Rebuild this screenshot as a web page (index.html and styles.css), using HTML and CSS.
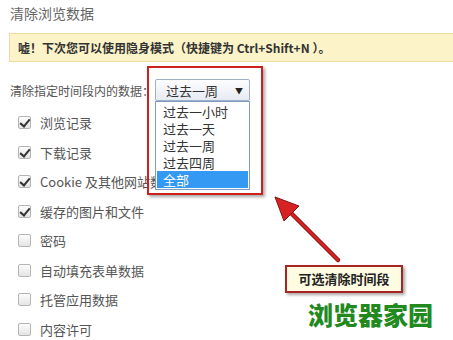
FILE: index.html
```html
<!DOCTYPE html>
<html lang="zh-CN">
<head>
    <meta charset="UTF-8">
    <meta name="viewport" content="width=device-width, initial-scale=1.0">
    <title>清除浏览数据</title>
    <link rel="stylesheet" href="styles.css">
</head>
<body>

<div class="page">
    <h2 class="title">清除浏览数据</h2>
    <div class="notice">嘘！下次您可以使用隐身模式（快捷键为 Ctrl+Shift+N ）。</div>

    <div class="range-row">
        <span class="range-label">清除指定时间段内的数据：</span>
        <div class="select-wrap">
            <div class="select">
                <span>过去一周</span>
                <span class="caret">▼</span>
            </div>
            <ul class="options">
                <li>过去一小时</li>
                <li>过去一天</li>
                <li>过去一周</li>
                <li>过去四周</li>
                <li class="selected">全部</li>
            </ul>
            <div class="red-frame"></div>
        </div>
    </div>

    <ul class="checks">
        <li><span class="box on"></span>浏览记录</li>
        <li><span class="box on"></span>下载记录</li>
        <li><span class="box on"></span>Cookie 及其他网站数据</li>
        <li><span class="box on"></span>缓存的图片和文件</li>
        <li><span class="box"></span>密码</li>
        <li><span class="box"></span>自动填充表单数据</li>
        <li><span class="box"></span>托管应用数据</li>
        <li><span class="box"></span>内容许可</li>
    </ul>

    <svg class="arrow" width="80" height="80" viewBox="0 0 80 80">
        <line x1="70" y1="70" x2="16" y2="16" stroke="#8b1010" stroke-width="4.5" stroke-linecap="round"/>
        <line x1="70" y1="70" x2="16" y2="16" stroke="#d62222" stroke-width="2.5" stroke-linecap="round"/>
        <polygon points="7,7 31,16 16,31" fill="#d62222" stroke="#8b1010" stroke-width="1"/>
    </svg>

    <div class="callout">可选清除时间段</div>
    <div class="watermark">浏览器家园</div>
</div>

</body>
</html>
```

FILE: styles.css
```css
body {
    margin: 0;
    background: #fff;
    font-family: "Noto Sans CJK SC", "Noto Sans", sans-serif;
    color: #555;
}
.page {
    position: relative;
    width: 453px;
    height: 340px;
    overflow: hidden;
}
.title {
    margin: 0;
    padding: 4px 0 0 10px;
    font-size: 14px;
    font-weight: normal;
    line-height: 18px;
    color: #666;
}
.notice {
    margin: 11px 0 0 9px;
    height: 27px;
    line-height: 27px;
    padding-left: 8px;
    background: #fcf3c9;
    border: 1px solid #eddc9e;
    border-right: none;
    font-size: 12px;
    font-weight: bold;
    color: #333;
}
.range-row {
    display: flex;
    align-items: center;
    margin-top: 17px;
    padding-left: 10px;
    height: 22px;
}
.range-label {
    font-size: 12px;
    width: 145px;
    color: #555;
}
.select-wrap {
    position: relative;
    z-index: 2;
}
.select {
    display: flex;
    justify-content: space-between;
    align-items: center;
    box-sizing: border-box;
    width: 95px;
    height: 22px;
    padding: 0 6px 0 10px;
    border: 1px solid #9fb0c6;
    border-radius: 2px;
    background: linear-gradient(#fdfdfe, #e6ebf2);
    font-size: 13px;
    color: #333;
}
.caret {
    font-size: 8px;
    color: #222;
}
.options {
    position: absolute;
    left: 0;
    top: 22px;
    box-sizing: border-box;
    width: 95px;
    margin: 0;
    padding: 1px;
    list-style: none;
    background: #fff;
    border: 1px solid #7f9dc4;
    font-size: 13px;
    color: #333;
}
.options li {
    height: 17px;
    line-height: 17px;
    padding-left: 6px;
}
.options .selected {
    background: #3399f3;
    color: #fff;
}
.red-frame {
    position: absolute;
    left: -8px;
    top: -13px;
    width: 112px;
    height: 125px;
    border: 2px solid #cf2020;
    box-shadow: 2px 2px 3px rgba(0, 0, 0, 0.35);
}
.checks {
    margin: 7px 0 0;
    padding: 0 0 0 18px;
    list-style: none;
    font-size: 13px;
}
.checks li {
    display: flex;
    align-items: center;
    height: 29.5px;
}
.box {
    box-sizing: border-box;
    width: 13px;
    height: 13px;
    margin-right: 9px;
    border: 1px solid #b5b5b5;
    border-radius: 2px;
    background: linear-gradient(#fcfcfc, #e4e4e4);
    position: relative;
}
.box.on::after {
    content: "";
    position: absolute;
    left: 3px;
    top: 0px;
    width: 4px;
    height: 8px;
    border: solid #333;
    border-width: 0 2px 2px 0;
    transform: rotate(40deg);
}
.arrow {
    position: absolute;
    left: 268px;
    top: 190px;
}
.callout {
    position: absolute;
    left: 285px;
    top: 265px;
    box-sizing: border-box;
    width: 118px;
    height: 28px;
    line-height: 24px;
    text-align: center;
    background: #fdfbe2;
    border: 2px solid #a82424;
    box-shadow: 2px 2px 3px rgba(0, 0, 0, 0.35);
    font-size: 13px;
    font-weight: bold;
    color: #222;
}
.watermark {
    position: absolute;
    left: 308px;
    top: 299px;
    font-size: 25px;
    font-weight: 900;
    line-height: 30px;
    color: #22891f;
    letter-spacing: 0;
}
```
